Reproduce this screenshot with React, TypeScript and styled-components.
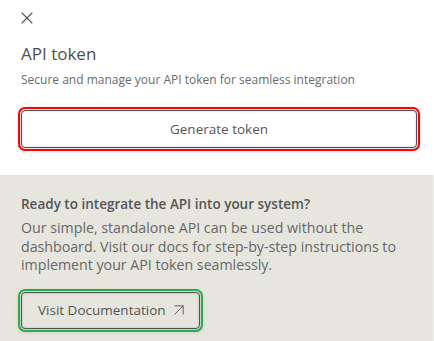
import styled, { createGlobalStyle } from "styled-components";
import { X, ArrowUpRight } from "lucide-react";

const GlobalStyle = createGlobalStyle`
  body {
    margin: 0;
    background: #ffffff;
    font-family: "Open Sans", "Noto Sans", sans-serif;
  }
`;

const Panel = styled.div`
  width: 434px;
  min-height: 341px;
  display: flex;
  flex-direction: column;
  background: #ffffff;
`;

const Header = styled.div`
  display: flex;
  flex-direction: column;
  padding: 8px 17px 27px 21px;
`;

const CloseButton = styled.button`
  display: flex;
  align-items: center;
  justify-content: center;
  width: 20px;
  height: 20px;
  margin-left: -4px;
  padding: 0;
  background: none;
  border: none;
  color: #555;
  cursor: pointer;
`;

const Title = styled.h2`
  margin: 14px 0 0;
  font-size: 17px;
  line-height: 24px;
  font-weight: 400;
  color: #4f4f4f;
`;

const Subtitle = styled.p`
  margin: 6px 0 0;
  font-size: 12px;
  line-height: 16px;
  color: #6a6a6a;
`;

const ActionButton = styled.button<{ $ring: string; $full?: boolean }>`
  display: inline-flex;
  align-items: center;
  justify-content: center;
  gap: 3px;
  height: ${({ $full }) => ($full ? "38px" : "37px")};
  width: ${({ $full }) => ($full ? "100%" : "auto")};
  padding: ${({ $full }) => ($full ? "0 16px" : "0 10px 0 16px")};
  border: 1px solid #505050;
  border-radius: 4px;
  background: ${({ $full }) => ($full ? "#ffffff" : "#e6e6df")};
  box-shadow: inset 0 0 3px rgba(0, 0, 0, 0.18), 0 1px 5px 2px rgba(0, 0, 0, 0.12);
  outline: 2px solid ${({ $ring }) => $ring};
  outline-offset: 1px;
  font-family: inherit;
  font-size: 13.5px;
  color: #555;
  cursor: pointer;
`;

const TopAction = styled.div`
  display: flex;
  margin-top: 22px;
`;

const InfoSection = styled.section`
  flex: 1;
  display: flex;
  flex-direction: column;
  align-items: flex-start;
  padding: 20px 17px 14px 21px;
  background: #e6e6df;
  border-right: 1px solid #f1f1ec;
`;

const InfoHeading = styled.h3`
  margin: 0;
  font-size: 13.5px;
  line-height: 18px;
  font-weight: 600;
  color: #555;
`;

const InfoText = styled.p`
  margin: 6px 0 0;
  font-size: 14.2px;
  line-height: 18.5px;
  color: #666;
`;

const DocsAction = styled.div`
  margin-top: 17px;
`;

export default function App() {
  return (
    <Panel>
      <GlobalStyle />
      <Header>
        <CloseButton aria-label="Close">
          <X size={20} strokeWidth={1.3} />
        </CloseButton>
        <Title>API token</Title>
        <Subtitle>Secure and manage your API token for seamless integration</Subtitle>
        <TopAction>
          <ActionButton $ring="#ff0000" $full>
            Generate token
          </ActionButton>
        </TopAction>
      </Header>
      <InfoSection>
        <InfoHeading>Ready to integrate the API into your system?</InfoHeading>
        <InfoText>
          Our simple, standalone API can be used without the dashboard. Visit our docs for
          step-by-step instructions to implement your API token seamlessly.
        </InfoText>
        <DocsAction>
          <ActionButton $ring="#22b04a">
            Visit Documentation
            <ArrowUpRight size={20} strokeWidth={1.1} />
          </ActionButton>
        </DocsAction>
      </InfoSection>
    </Panel>
  );
}
